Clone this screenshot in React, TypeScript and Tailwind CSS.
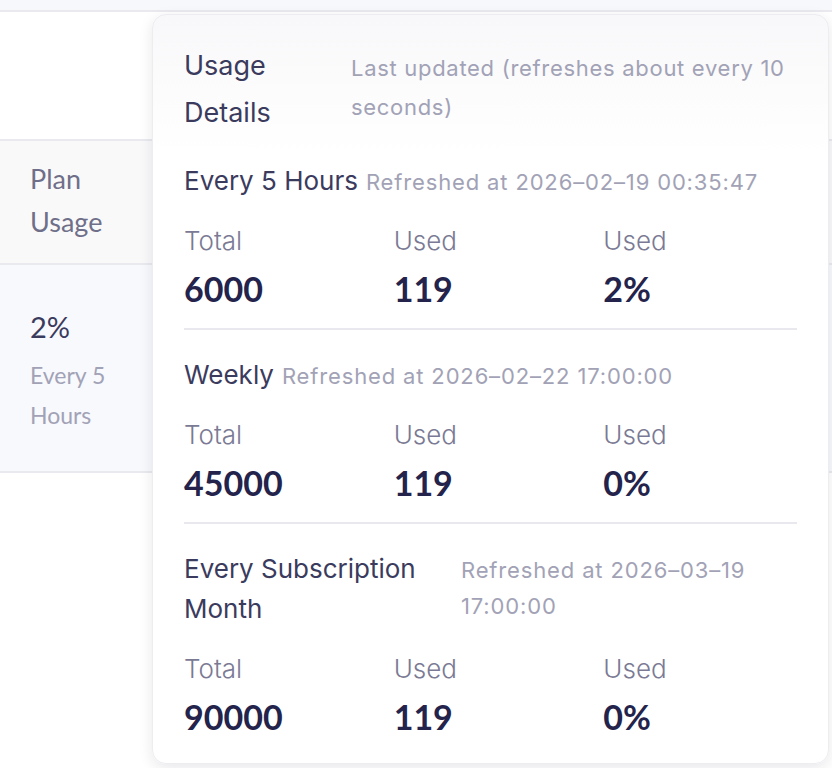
import React from 'react';

const sans = "font-['Inter','Noto_Sans',sans-serif]";
const lato = "font-['Lato','Noto_Sans',sans-serif]";

type Stat = { label: string; value: string };
type Section = { title: string; refreshed: string; stats: Stat[]; titleWidth?: string };

const sections: Section[] = [
  {
    title: 'Every 5 Hours',
    refreshed: 'Refreshed at 2026–02–19 00:35:47',
    stats: [
      { label: 'Total', value: '6000' },
      { label: 'Used', value: '119' },
      { label: 'Used', value: '2%' },
    ],
  },
  {
    title: 'Weekly',
    refreshed: 'Refreshed at 2026–02–22 17:00:00',
    stats: [
      { label: 'Total', value: '45000' },
      { label: 'Used', value: '119' },
      { label: 'Used', value: '0%' },
    ],
  },
  {
    title: 'Every Subscription Month',
    refreshed: 'Refreshed at 2026–03–19 17:00:00',
    titleWidth: 'w-[269px] shrink-0',
    stats: [
      { label: 'Total', value: '90000' },
      { label: 'Used', value: '119' },
      { label: 'Used', value: '0%' },
    ],
  },
];

function UsageSection({ section, last }: { section: Section; last: boolean }) {
  return (
    <div>
      <div className="flex items-baseline gap-2">
        <span className={`text-[26px] leading-[40px] text-[#3b3b5e] ${section.titleWidth ?? ''}`}>
          {section.title}
        </span>
        <span className="text-[22px] leading-[36px] tracking-[0.85px] text-[#a2a2b6]">{section.refreshed}</span>
      </div>
      <div className="grid grid-cols-3 gap-4 mt-[20px]">
        {section.stats.map((s, i) => (
          <div key={i}>
            <div className="text-[26px] leading-[40px] font-light text-[#7a7a94]">{s.label}</div>
            <div className={`${lato} mt-[8px] text-[34px] leading-[40px] font-bold text-[#23234b]`}>
              {s.value}
            </div>
          </div>
        ))}
      </div>
      {!last && <div className="mt-[19px] mb-[25px] h-[2px] bg-[#e8e8ee]" />}
    </div>
  );
}

export default function App() {
  return (
    <div className={`relative w-[832px] h-[768px] overflow-hidden bg-white ${sans}`}>
      {/* background table */}
      <div className="h-[12px] bg-[#f7f8fc] border-b-2 border-[#e9e9ef]" />
      <div className="h-[127px]" />
      <div className={`${lato} border-t-2 border-[#e9e9ef] bg-[#f9f9fa] h-[124px] pl-[30px] pt-[16px] text-[27px] leading-[43px] text-[#6f6f89]`}>
        <div>Plan</div>
        <div>Usage</div>
      </div>
      <div className={`${lato} border-t-2 border-b-2 border-[#e9e9ef] bg-[#f8f9fd] h-[210px] pl-[30px] pt-[42px]`}>
        <div className="text-[29px] leading-[40px] text-[#3b3b5e]">2%</div>
        <div className="mt-[8px] text-[23px] leading-[40px] text-[#a2a2b6]">
          <div>Every 5</div>
          <div>Hours</div>
        </div>
      </div>

      {/* usage popover */}
      <div className="absolute left-[152px] top-[14px] w-[677px] rounded-[14px] border border-[#ececf1] bg-gradient-to-b from-[#f8f8fa] to-white to-[140px] shadow-[0_4px_14px_rgba(30,30,60,0.10)] px-[31px] pt-[27px] pb-[26px]">
        <div className="flex gap-2">
          <h2 className="w-[159px] shrink-0 text-[27px] leading-[47px] text-[#3b3b5e]">Usage Details</h2>
          <p className="mt-[7px] text-[22px] leading-[39px] tracking-[0.7px] text-[#a2a2b6]">
            Last updated (refreshes about every 10 seconds)
          </p>
        </div>
        <div className="mt-[25px]">
          {sections.map((s, i) => (
            <UsageSection key={s.title} section={s} last={i === sections.length - 1} />
          ))}
        </div>
      </div>
    </div>
  );
}
